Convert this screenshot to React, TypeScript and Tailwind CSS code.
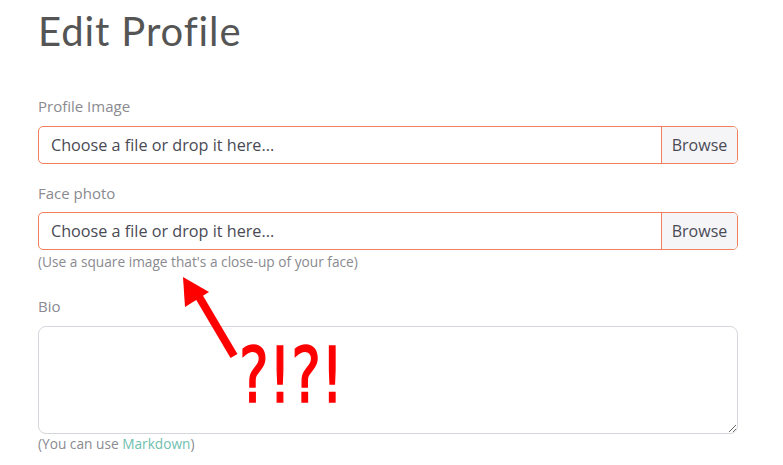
import React from "react";

function FileInput() {
  return (
    <div className="flex h-[38px] w-full rounded-[5px] border border-[#f57f5b] overflow-hidden">
      <div className="flex flex-1 items-center pl-[12px] text-[16.2px] text-[#4a4a55]">Choose a file or drop it here...</div>
      <div className="flex w-[76px] items-center justify-center border-l border-[#f57f5b] bg-[#f5f5f8] text-[16px] text-[#4a4a55]">Browse</div>
    </div>
  );
}

export default function App() {
  return (
    <div className="relative h-[465px] w-[783px] overflow-hidden bg-white" style={{ fontFamily: '"Open Sans", "Noto Sans", sans-serif' }}>
      <div className="pl-[38px] pr-[45px]">
        <h1 className="pt-[7px] text-[40px] leading-[48px] text-[#555555] tracking-[0.9px]" style={{ fontFamily: 'Lato, "Open Sans", sans-serif', fontWeight: 400 }}>Edit Profile</h1>
        <div className="mt-[41px] text-[15px] leading-[20px] text-[#8a8a8f]">Profile Image</div>
        <div className="mt-[10px]"><FileInput /></div>
        <div className="mt-[19px] text-[15px] leading-[20px] text-[#8a8a8f]">Face photo</div>
        <div className="mt-[9px]"><FileInput /></div>
        <div className="mt-[3px] text-[13.7px] leading-[18px] text-[#8a8a8f]">(Use a square image that's a close-up of your face)</div>
        <div className="mt-[25px] text-[15px] leading-[20px] text-[#8a8a8f]">Bio</div>
        <textarea className="mt-[10px] block h-[108px] w-full rounded-[8px] border border-[#d3d6db] resize-y outline-none" />
        <div className="mt-[1px] text-[13.7px] leading-[18px] text-[#8a8a8f]">(You can use <span className="text-[#6fc0b0]">Markdown</span>)</div>
      </div>
      <svg className="absolute left-0 top-0" width="783" height="465">
        <line x1="234" y1="356" x2="195" y2="290" stroke="#ff0000" strokeWidth="8" />
        <polygon points="183,277 209,292 185,307" fill="#ff0000" />
      </svg>
      <div className="absolute left-[239px] top-[331px] text-[76px] leading-[90px] text-[#ff0000]" style={{ fontFamily: '"DejaVu Sans Condensed", "DejaVu Sans", sans-serif', transform: "scaleX(0.82)", transformOrigin: "left", WebkitTextStroke: "1.5px #ff0000" }}>?!?!</div>
    </div>
  );
}
